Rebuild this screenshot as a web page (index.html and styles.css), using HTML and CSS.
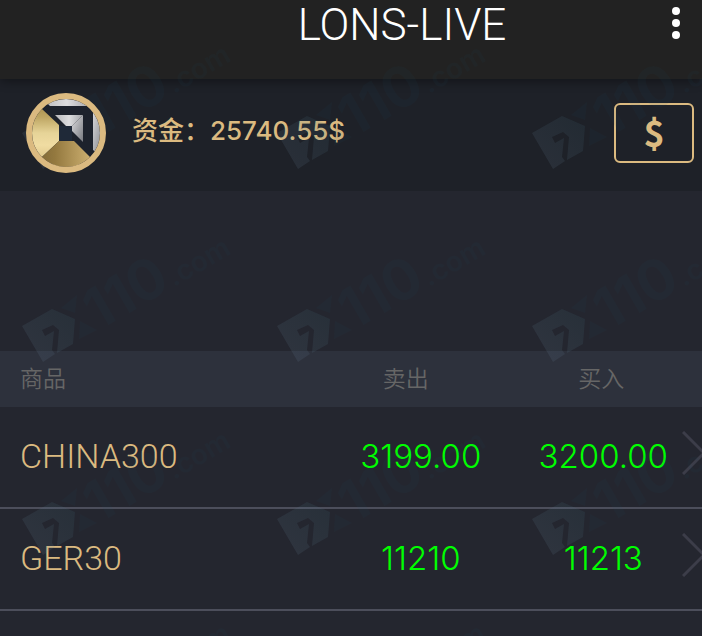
FILE: index.html
```html
<!DOCTYPE html>
<html lang="zh-CN">
  <head>
    <meta charset="UTF-8" />
    <meta name="viewport" content="width=device-width, initial-scale=1.0" />
    <title>LONS-LIVE</title>
    <link rel="stylesheet" href="styles.css">
  </head>
  <body>
    <header class="topbar">
      <h1 class="topbar-title">LONS-LIVE</h1>
      <button type="button" class="menu-btn" aria-label="菜单">
        <svg width="8" height="32" viewBox="0 0 8 32" fill="#fff">
          <circle cx="4" cy="4" r="4" />
          <circle cx="4" cy="16" r="4" />
          <circle cx="4" cy="28" r="4" />
        </svg>
      </button>
    </header>

    <section class="account">
      <svg class="avatar" width="80" height="80" viewBox="0 0 80 80">
        <defs>
          <linearGradient id="goldLeft" x1="0" y1="0" x2="0" y2="1">
            <stop offset="0" stop-color="#94793a" />
            <stop offset="0.3" stop-color="#bda562" />
            <stop offset="0.5" stop-color="#e6d498" />
            <stop offset="0.65" stop-color="#f0dca2" />
            <stop offset="1" stop-color="#cfb574" />
          </linearGradient>
          <linearGradient id="goldBottom" x1="0" y1="0" x2="1" y2="0">
            <stop offset="0" stop-color="#725d31" />
            <stop offset="0.45" stop-color="#94793f" />
            <stop offset="1" stop-color="#cdb071" />
          </linearGradient>
          <linearGradient id="silverTop" x1="0" y1="0" x2="1" y2="0">
            <stop offset="0" stop-color="#b8b8bb" />
            <stop offset="0.5" stop-color="#dddddf" />
            <stop offset="1" stop-color="#a0a1a5" />
          </linearGradient>
          <linearGradient id="silverSide" x1="0" y1="0" x2="1" y2="1">
            <stop offset="0" stop-color="#dcdcde" />
            <stop offset="1" stop-color="#77797f" />
          </linearGradient>
          <clipPath id="disc"><circle cx="40" cy="40" r="34" /></clipPath>
        </defs>
        <g clip-path="url(#disc)">
          <rect width="80" height="80" fill="#1d222c" />
          <path d="M0 0L16 16L33 32V48L16 64L0 80Z" fill="url(#goldLeft)" />
          <path d="M33 48H48L65 65V80H0V80L16 64Z" fill="url(#goldBottom)" />
          <path d="M16 5H66V13H24Z" fill="url(#silverTop)" />
          <path d="M67 13H78V65L67 57Z" fill="url(#silverSide)" />
          <path d="M29 22H57L46 33H40Z" fill="url(#silverTop)" />
          <path d="M57 22V49L46 38V33Z" fill="url(#silverSide)" />
          <rect x="33" y="33" width="13" height="15" fill="#1f2938" />
        </g>
        <circle cx="40" cy="40" r="37" fill="none" stroke="#dbba80" stroke-width="6" />
      </svg>
      <p class="balance">资金：25740.55$</p>
      <button type="button" class="deposit-btn">$</button>
    </section>

    <main class="quotes">
      <table class="quote-table">
        <thead>
          <tr>
            <th class="col-name" scope="col">商品</th>
            <th class="col-sell" scope="col">卖出</th>
            <th class="col-buy" scope="col">买入</th>
            <td class="col-more"></td>
          </tr>
        </thead>
        <tbody>
          <tr>
            <td class="name">CHINA300</td>
            <td class="sell">3199.00</td>
            <td class="buy">3200.00</td>
            <td class="more">
              <a href="#china300" aria-label="CHINA300">
                <svg width="26" height="44" viewBox="0 0 26 44"><path d="M1 1L22 22L1 43" /></svg>
              </a>
            </td>
          </tr>
          <tr>
            <td class="name">GER30</td>
            <td class="sell">11210</td>
            <td class="buy">11213</td>
            <td class="more">
              <a href="#ger30" aria-label="GER30">
                <svg width="26" height="44" viewBox="0 0 26 44"><path d="M1 1L22 22L1 43" /></svg>
              </a>
            </td>
          </tr>
        </tbody>
      </table>
    </main>

    <!-- repeated site mark over the whole page -->
    <svg class="watermark" aria-hidden="true">
      <defs>
        <linearGradient id="markFill" x1="0" y1="1" x2="1" y2="0">
          <stop offset="0" stop-color="#8199b5" />
          <stop offset="1" stop-color="#3f7182" />
        </linearGradient>
        <pattern id="mark" width="255" height="193" patternUnits="userSpaceOnUse">
          <path d="M22 133L52 116L75 126L73 151L57 160L59 137L53 132L42 137L45 143L54 138L52 157L55 161L43 169Z" fill="url(#markFill)" opacity="0.13" />
          <g fill="#14506a" opacity="0.07">
            <path d="M61 115L77 102L75 120Z" />
            <path d="M80 128L97 137L79 146Z" />
            <text class="mark-number" transform="translate(98 138) rotate(-30)">110</text>
            <text class="mark-domain" transform="translate(174 94) rotate(-30)">.com</text>
          </g>
        </pattern>
      </defs>
      <rect width="100%" height="100%" fill="url(#mark)" />
    </svg>
  </body>
</html>
```

FILE: styles.css
```css
* {
  box-sizing: border-box;
}

body {
  margin: 0;
  min-height: 100vh;
  background-color: #24262f;
  color: #dbba80;
  font-family: Roboto, "Noto Sans CJK SC", sans-serif;
}

button {
  padding: 0;
  background: none;
  cursor: pointer;
}

.topbar {
  position: relative;
  display: flex;
  align-items: flex-start;
  height: 79px;
  padding: 0 22px 0 132px;
  background-color: #222222;
  box-shadow: 0 2px 10px rgba(0, 0, 0, 0.4);
}

.topbar-title {
  flex: 1;
  margin: 0;
  color: #fff;
  font-size: 44px;
  font-weight: 350;
  line-height: 50px;
  text-align: center;
}

.menu-btn {
  display: flex;
  padding-top: 7px;
  border: none;
}

.account {
  display: flex;
  align-items: center;
  height: 112px;
  padding: 0 8px 4px 26px;
  background-color: #1e2128;
}

.avatar {
  position: relative;
  z-index: 1;
}

.balance {
  flex: 1;
  margin: 0 0 0 26px;
  padding-bottom: 10px;
  font-family: Inter, "Noto Sans CJK SC", sans-serif;
  font-size: 26px;
  font-weight: 500;
}

.deposit-btn {
  width: 80px;
  height: 60px;
  border: 2px solid #dbba80;
  border-radius: 6px;
  color: #dbba80;
  font-family: "Noto Sans CJK SC", sans-serif;
  font-size: 36px;
  font-weight: 700;
  line-height: 52px;
  padding-bottom: 4px;
}

.quotes {
  padding-top: 160px;
}

.quote-table {
  width: 100%;
  table-layout: fixed;
  border-collapse: separate;
  border-spacing: 0;
}

.quote-table th,
.quote-table td {
  padding: 0;
  text-align: center;
}

.quote-table thead th,
.quote-table thead td {
  height: 56px;
  padding-bottom: 4px;
  background-color: #2d313c;
  color: #666666;
  font-size: 23px;
  font-weight: 350;
}

.quote-table tbody td {
  height: 102px;
  padding-bottom: 2px;
  border-bottom: 2px solid #4c4e5b;
  font-size: 34px;
  font-weight: 350;
}

.quote-table .col-name,
.quote-table .name {
  padding-left: 20px;
  text-align: left;
}

.quote-table .col-sell {
  width: 29%;
  padding-right: 26px;
}

.quote-table .col-buy {
  width: 23%;
}

.quote-table .col-more {
  width: 20px;
}

.quote-table tbody .sell,
.quote-table tbody .buy {
  padding-left: 4px;
  color: #00ff00;
  font-family: Inter, sans-serif;
  font-size: 33px;
}

.quote-table tbody .more {
  padding-bottom: 8px;
  overflow: hidden;
}

.more a {
  display: flex;
}

.more svg {
  flex: none;
  fill: none;
  stroke: #3c3d49;
  stroke-width: 3;
}

.watermark {
  position: fixed;
  inset: 0;
  width: 100%;
  height: 100%;
  pointer-events: none;
}

.mark-number {
  font-family: Inter, sans-serif;
  font-size: 56px;
  font-weight: 700;
}

.mark-domain {
  font-family: Inter, sans-serif;
  font-size: 28px;
  font-weight: 600;
}
```
